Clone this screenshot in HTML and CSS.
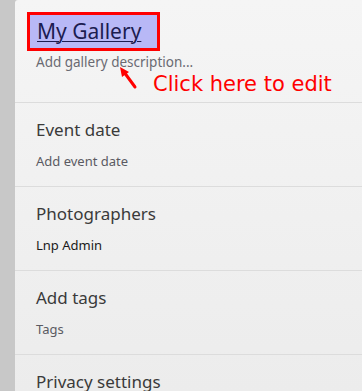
FILE: index.html
```html
<!DOCTYPE html>
<html>
<head>
<meta charset="utf-8">
<link rel="stylesheet" href="styles.css">
</head>
<body>
<div class="page">
  <div class="rail"></div>
  <div class="panel">
    <section class="block head">
      <div class="title-box"><a class="gallery-title" href="#">My Gallery</a></div>
      <div class="desc">Add gallery description...</div>
      <svg class="arrow" width="24" height="26" viewBox="0 0 24 26">
        <line x1="19" y1="22" x2="8" y2="7" stroke="#ff0000" stroke-width="3" stroke-linecap="round"/>
        <polygon points="4,2 13,7 6,12" fill="#ff0000"/>
      </svg>
      <div class="hint">Click here to edit</div>
    </section>
    <section class="block">
      <h2 class="label">Event date</h2>
      <div class="value muted">Add event date</div>
    </section>
    <section class="block">
      <h2 class="label">Photographers</h2>
      <div class="value dark">Lnp Admin</div>
    </section>
    <section class="block">
      <h2 class="label">Add tags</h2>
      <div class="value muted">Tags</div>
    </section>
    <section class="block">
      <h2 class="label">Privacy settings</h2>
    </section>
  </div>
</div>
</body>
</html>
```
FILE: styles.css
```css
html, body {
  margin: 0;
  padding: 0;
  height: 100%;
  overflow: hidden;
}
body {
  font-family: "Noto Sans", sans-serif;
  background: #c8c8c8;
}
.page {
  display: flex;
  height: 391px;
}
.rail {
  width: 15px;
  flex: none;
  background: #c8c8c8;
}
.panel {
  flex: 1;
  background: linear-gradient(#f5f5f5, #ececec);
  border-top-left-radius: 3px;
  overflow: hidden;
}
.block {
  position: relative;
  height: 83px;
  border-bottom: 1px solid #dcdcdc;
  padding: 0 0 0 21px;
}
.block.head {
  height: 90px;
  padding: 12px 0 0 12px;
}
.title-box {
  width: 120px;
  height: 33px;
  border: 3px solid #ff0000;
  background: #b8b8f6;
  padding-left: 7px;
}
.gallery-title {
  font-size: 21px;
  line-height: 33px;
  color: #1c1c50;
  text-decoration: underline;
  text-decoration-thickness: 1px;
  text-underline-offset: 2px;
}
.desc {
  margin: 2px 0 0 9px;
  font-size: 13.5px;
  line-height: 18px;
  color: #6a6a72;
}
.arrow {
  position: absolute;
  left: 101px;
  top: 65px;
}
.hint {
  position: absolute;
  left: 138px;
  top: 72px;
  font-family: "DejaVu Sans", sans-serif;
  font-size: 21px;
  line-height: 24px;
  color: #ff0000;
}
.label {
  margin: 0;
  padding-top: 15px;
  font-size: 17px;
  font-weight: normal;
  line-height: 24px;
  color: #3a3a3a;
}
.value {
  margin-top: 10px;
  font-size: 13px;
  line-height: 18px;
}
.muted { color: #5a5a62; }
.dark { color: #1a1a1a; }
```
